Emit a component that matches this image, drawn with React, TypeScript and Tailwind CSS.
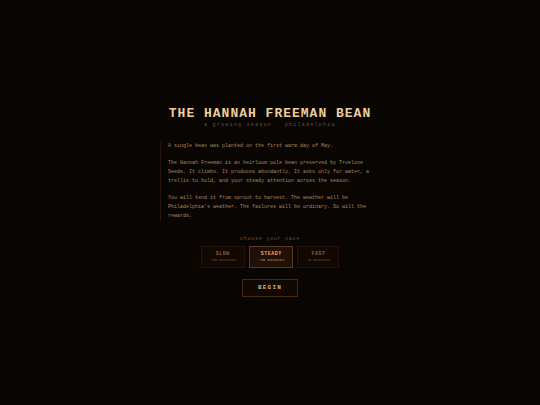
import { useState } from 'react';
import clsx from 'clsx';

const paces = [
  { id: 'slow', name: 'SLOW', length: '~30 minutes' },
  { id: 'steady', name: 'STEADY', length: '~15 minutes' },
  { id: 'fast', name: 'FAST', length: '~5 minutes' },
];

export default function App() {
  const [pace, setPace] = useState('steady');

  return (
    <main className="flex min-h-screen flex-col items-center justify-center bg-[#080502] pb-0.5 font-['Liberation_Mono',monospace] text-[5px]">
      <header className="text-center">
        <h1 className="text-[13px] leading-[16px] font-bold tracking-[1px] text-[#ecd09c]">
          THE HANNAH FREEMAN BEAN
        </h1>
        <p className="leading-[7px] tracking-[0.25em] text-[#76502f]">
          a growing season · philadelphia
        </p>
      </header>

      <section className="mt-[13px] flex w-full max-w-[220px] flex-col gap-2 border-l border-[#24140a] pl-[7px] leading-[9px] text-[#ac8660]">
        <p>A single bean was planted on the first warm day of May.</p>
        <p>
          The Hannah Freeman is an heirloom pole bean preserved by Truelove
          Seeds. It climbs. It produces abundantly. It asks only for water, a
          trellis to hold, and your steady attention across the season.
        </p>
        <p>
          You will tend it from sprout to harvest. The weather will be
          Philadelphia's weather. The failures will be ordinary. So will the
          rewards.
        </p>
      </section>

      <p id="pace-label" className="mt-[15px] leading-[7px] tracking-[0.15em] text-[#76502f]">
        choose your pace
      </p>
      <div role="group" aria-labelledby="pace-label" className="mt-[3px] flex gap-1">
        {paces.map((p) => (
          <button
            key={p.id}
            type="button"
            aria-pressed={pace === p.id}
            onClick={() => setPace(p.id)}
            className={clsx(
              'flex cursor-pointer flex-col items-center border px-2 py-1',
              pace === p.id
                ? 'border-[#5c3820] bg-[#211007] text-[#e0aa72]'
                : 'border-[#24130a] bg-[#120802] text-[#8a6440]',
            )}
          >
            <span className="leading-[7px] font-bold tracking-widest">{p.name}</span>
            <span
              className={clsx(
                'text-[4px] leading-[5px]',
                pace === p.id ? 'text-[#c89468]' : 'text-[#7a5030]',
              )}
            >
              {p.length}
            </span>
          </button>
        ))}
      </div>

      <button
        type="button"
        className="mt-[11px] cursor-pointer border border-[#44290f] bg-[#120802] px-[15px] py-1 text-[6px] leading-[8px] font-bold tracking-[0.2em] text-[#d8b07c]"
      >
        BEGIN
      </button>
    </main>
  );
}
